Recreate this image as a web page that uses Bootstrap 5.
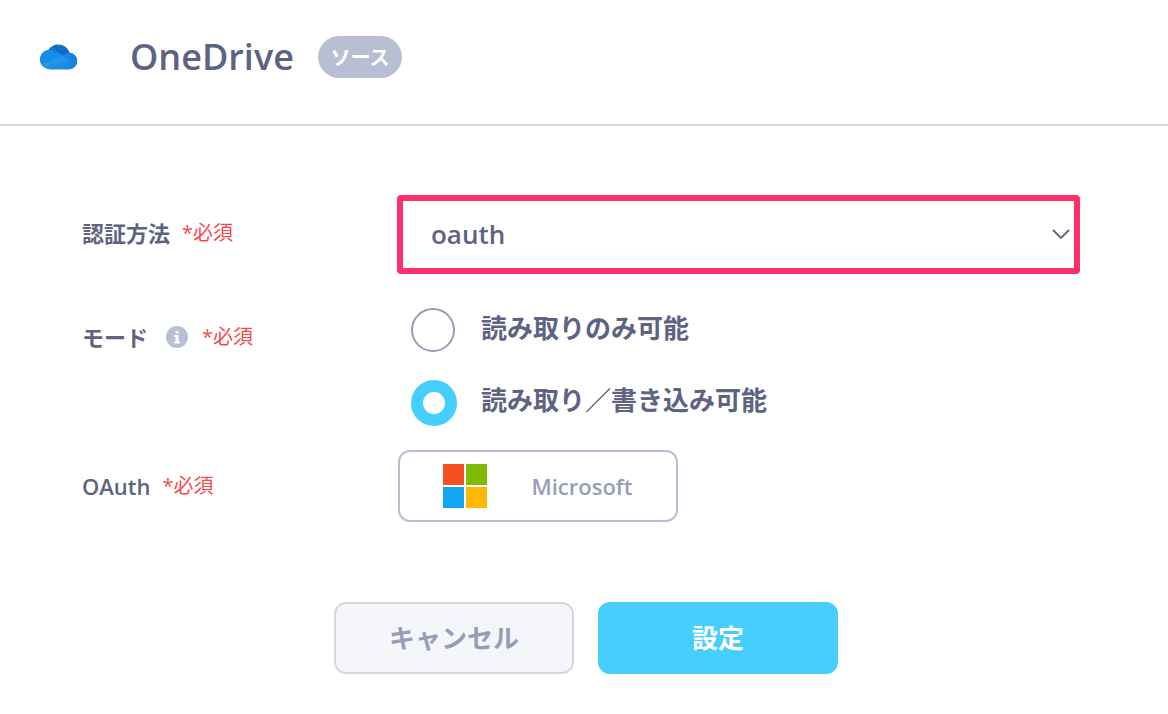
<!DOCTYPE html>
<html lang="ja">
<head>
<meta charset="utf-8">
<meta name="viewport" content="width=device-width, initial-scale=1">
<title>OneDrive</title>
<link href="https://cdn.jsdelivr.net/npm/bootstrap@5.3.0/dist/css/bootstrap.min.css" rel="stylesheet">
<style>
  body { font-family: "Open Sans", "Noto Sans CJK JP", sans-serif; color: #5d6380; background: #fff; font-weight: 600; }
  .source-header { min-height: 126px; padding: 0 38px 10px; border-bottom: 2px solid #d4d9e4; }
  .source-header h1 { font-size: 36px; line-height: 48px; font-weight: 600; margin: 0 24px 0 52px; }
  .source-kind { font-size: 20px; line-height: 44px; height: 42px; width: 84px; padding: 0; background: #b8bfd3; color: #fff; font-weight: 700; }
  .source-form { padding-top: 69px; }
  .field-grid { display: grid; grid-template-columns: 315px minmax(0, 1fr); padding: 0 88px 0 82px; }
  .field-label { font-size: 22px; line-height: 32px; font-weight: 600; }
  .required { color: #f9494c; font-size: 20px; line-height: 32px; font-weight: 400; }
  .auth-select { height: 79px; border: 6px solid #ff2f6c; border-radius: 4px; padding: 0 48px 0 28px; font-size: 26px; font-weight: 600; color: #5d6380;
    background-image: url("data:image/svg+xml,%3Csvg xmlns='http://www.w3.org/2000/svg' viewBox='0 0 18 12'%3E%3Cpath d='M1 1l8 8 8-8' fill='none' stroke='%235d6380' stroke-width='1.8'/%3E%3C/svg%3E");
    background-size: 18px 12px; background-position: right 4px center; }
  .mode-label-row { padding-top: 47px; }
  .info-icon { margin: 4px 14px 0 18px; }
  .mode-list { padding: 18px 0 0 14px; }
  .mode-option { gap: 24px; font-size: 26px; line-height: 72px; font-weight: 700; }
  .mode-option .form-check-input { width: 44px; height: 44px; margin: 16px 2px 0 0; border: 2px solid #979db8; flex: none; }
  .mode-option .form-check-input:checked { width: 46px; height: 46px; margin-right: 0; background: #fff; border: 12px solid #46ceff; }
  .provider-row { padding-top: 14px; }
  .provider-btn { width: 280px; height: 72px; border: 2px solid #b8bfd3; border-radius: 12px; gap: 44px; margin-left: 1px; color: #979db8; font-size: 22px; font-weight: 600; padding: 0; }
  .form-actions { margin-top: 80px; padding-left: 4px; }
  .action-btn { width: 240px; height: 72px; border-radius: 12px; font-size: 26px; font-weight: 700; border-width: 2px; }
  .cancel-btn, .cancel-btn:hover { background: #f4f6f9; border-color: #d2d9e3; color: #979db8; }
  .save-btn, .save-btn:hover { background: #46ceff; border-color: #46ceff; color: #fff; }
</style>
</head>
<body>
<header class="source-header d-flex align-items-center">
  <svg width="40" height="28" viewBox="0 0 40 28" role="img" aria-label="OneDrive">
    <defs>
      <linearGradient id="top" x2="1" y2="1"><stop stop-color="#1678d2"/><stop offset="1" stop-color="#0a5cad"/></linearGradient>
      <linearGradient id="bottom" x2="1" y2="1"><stop stop-color="#2aa5f3"/><stop offset="1" stop-color="#117fda"/></linearGradient>
      <clipPath id="cloud"><circle cx="11.500" cy="16.500" r="9.500"/><circle cx="20.300" cy="13.500" r="12"/><circle cx="31" cy="18" r="8.200"/><path d="M11 14h20v12.200H11z"/></clipPath>
    </defs>
    <g clip-path="url(#cloud)">
      <path fill="url(#top)" d="M0 0h40v28H0z"/>
      <path fill="#168ee8" d="M0 6.500h11c3 0 5 .8 7 2L25 12.500 0 25z"/>
      <path fill="#1384df" d="M24 12.500c4-3 9-3.500 16-2v18z"/>
      <path fill="url(#bottom)" d="M3 22.500L24 12.500 38 21v7H3z"/>
    </g>
  </svg>
  <h1>OneDrive</h1>
  <span class="source-kind badge rounded-pill">ソース</span>
</header>
<main>
<form class="source-form">
  <div class="field-grid">
    <div class="d-flex align-items-center gap-2 pb-1">
      <label class="field-label" for="auth">認証方法</label>
      <span class="required ms-1">*必須</span>
    </div>
    <select class="form-select auth-select shadow-none" id="auth"><option>oauth</option></select>
  </div>
  <div class="field-grid" role="radiogroup" aria-labelledby="mode-label">
    <div class="mode-label-row d-flex align-items-start">
      <span class="field-label" id="mode-label">モード</span>
      <svg class="info-icon" width="22" height="24" viewBox="0 0 22 24" aria-hidden="true"><circle cx="11" cy="12" r="11" fill="#b8bfd3"/><path fill="#fff" d="M9.500 6h3v2.500h-3zM8 10h4.500v6.500H14v2H8v-2h1.500V12H8z"/></svg>
      <span class="required">*必須</span>
    </div>
    <div class="mode-list">
      <div class="mode-option d-flex align-items-start">
        <input class="form-check-input" type="radio" name="mode" id="read"><label for="read">読み取りのみ可能</label>
      </div>
      <div class="mode-option d-flex align-items-start">
        <input class="form-check-input" type="radio" name="mode" id="write" checked><label for="write">読み取り／書き込み可能</label>
      </div>
    </div>
  </div>
  <div class="field-grid provider-row">
    <div class="d-flex align-items-center">
      <label class="field-label" for="oauth">OAuth</label>
      <span class="required ms-2 ps-1">*必須</span>
    </div>
    <button class="btn provider-btn d-flex align-items-center justify-content-center" type="button" id="oauth">
      <svg width="44" height="44" viewBox="0 0 44 44" aria-hidden="true"><path fill="#f4511f" d="M0 0h21v21H0z"/><path fill="#80bb03" d="M23 0h21v21H23z"/><path fill="#12a5f1" d="M0 23h21v21H0z"/><path fill="#ffb903" d="M23 23h21v21H23z"/></svg>
      <span>Microsoft</span>
    </button>
  </div>
  <div class="form-actions d-flex justify-content-center gap-4">
    <button class="btn action-btn cancel-btn" type="button">キャンセル</button>
    <button class="btn action-btn save-btn" type="submit">設定</button>
  </div>
</form>
</main>
<script src="https://cdn.jsdelivr.net/npm/bootstrap@5.3.0/dist/js/bootstrap.bundle.min.js"></script>
</body>
</html>
